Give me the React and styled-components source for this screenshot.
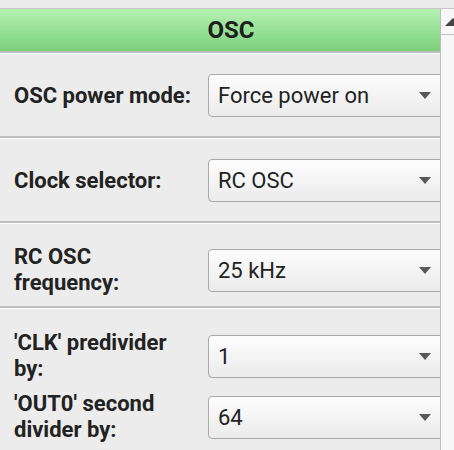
import React from "react";
import styled, { createGlobalStyle } from "styled-components";

const GlobalStyle = createGlobalStyle`
  html, body {
    margin: 0;
    padding: 0;
    background: #ececec;
    overflow: hidden;
  }
  body {
    font-family: Roboto, "Liberation Sans", sans-serif;
  }
`;

const Frame = styled.div`
  width: 454px;
  height: 450px;
  display: flex;
  flex-direction: column;
  overflow: hidden;
`;

const TopStrip = styled.div`
  height: 8px;
  border-bottom: 1px solid #c6c6c6;
  background: #ececec;
`;

const Body = styled.div`
  flex: 1;
  display: flex;
  min-height: 0;
`;

const Main = styled.div`
  width: 440px;
  overflow: hidden;
  display: flex;
  flex-direction: column;
`;

const Header = styled.div`
  height: 42px;
  width: 462px;
  flex-shrink: 0;
  display: flex;
  align-items: center;
  justify-content: center;
  background: linear-gradient(#b4f1b1, #7bd17b);
  border-bottom: 2px solid #bdbdbd;
  box-shadow: 0 1px 0 #ffffff;
  margin-bottom: 1px;
  font-weight: 700;
  font-size: 24px;
  color: #1e1e1e;
`;

const Section = styled.div`
  display: flex;
  flex-direction: column;
  gap: 18px;
  padding: ${(p) => (p.last ? "21px 0 0" : "20px 0 19px")};
  border-bottom: ${(p) => (p.last ? "none" : "2px solid #bdbdbd")};
  box-shadow: ${(p) => (p.last ? "none" : "0 1px 0 #ffffff")};
  margin-bottom: ${(p) => (p.last ? "0" : "1px")};
  flex-shrink: 0;
`;

const Field = styled.div`
  display: grid;
  grid-template-columns: 194px 240px;
  align-items: center;
  padding-left: 14px;
  height: 43px;
`;

const Label = styled.div`
  font-weight: 700;
  font-size: 22px;
  line-height: 26px;
  color: #222;
`;

const Select = styled.div`
  height: 43px;
  box-sizing: border-box;
  border: 1px solid #a9a9a9;
  border-radius: 4px;
  background: linear-gradient(#fdfdfd, #ebebeb);
  display: flex;
  align-items: center;
  justify-content: space-between;
  padding: 0 16px 0 9px;
  font-size: 22px;
  color: #222;
`;

const Arrow = styled.span`
  width: 0;
  height: 0;
  border-left: 6.5px solid transparent;
  border-right: 6.5px solid transparent;
  border-top: 7px solid #585858;
`;

const Scrollbar = styled.div`
  flex: 1;
  border-left: 1px solid #bcbcbc;
  background: #f7f7f7;
  display: flex;
  flex-direction: column;
`;

const ScrollButton = styled.div`
  height: 25px;
  border-bottom: 1px solid #c4c4c4;
  position: relative;
`;

const UpArrow = styled.span`
  position: absolute;
  left: 4px;
  top: 9px;
  width: 0;
  height: 0;
  border-left: 8px solid transparent;
  border-right: 8px solid transparent;
  border-bottom: 8px solid #444;
`;

const sections = [
  [{ label: "OSC power mode:", value: "Force power on" }],
  [{ label: "Clock selector:", value: "RC OSC" }],
  [{ label: ["RC OSC", "frequency:"], value: "25 kHz" }],
  [
    { label: ["'CLK' predivider", "by:"], value: "1" },
    { label: ["'OUT0' second", "divider by:"], value: "64" },
  ],
];

export default function App() {
  return (
    <Frame>
      <GlobalStyle />
      <TopStrip />
      <Body>
        <Main>
          <Header>OSC</Header>
          {sections.map((fields, i) => (
            <Section key={i} last={i === sections.length - 1}>
              {fields.map((f) => (
                <Field key={f.value}>
                  <Label>
                    {Array.isArray(f.label)
                      ? f.label.map((line) => <div key={line}>{line}</div>)
                      : f.label}
                  </Label>
                  <Select>
                    {f.value}
                    <Arrow />
                  </Select>
                </Field>
              ))}
            </Section>
          ))}
        </Main>
        <Scrollbar>
          <ScrollButton>
            <UpArrow />
          </ScrollButton>
        </Scrollbar>
      </Body>
    </Frame>
  );
}
